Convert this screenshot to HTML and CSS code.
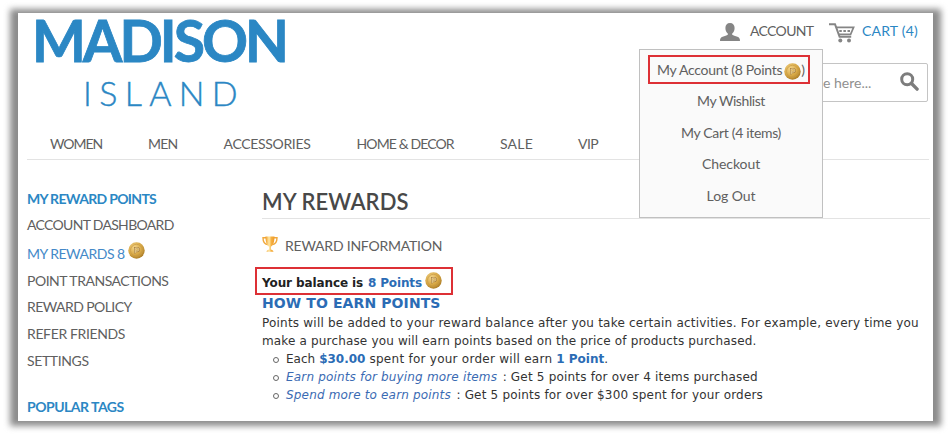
FILE: index.html
```
<!DOCTYPE html>
<html lang="en">
<head>
<meta charset="utf-8">
<title>My Rewards - Madison Island</title>
<link rel="stylesheet" href="styles.css">
</head>
<body>
<svg class="defs" width="0" height="0" aria-hidden="true">
  <defs>
    <radialGradient id="gold" cx="38%" cy="32%" r="75%">
      <stop offset="0" stop-color="#f3d489"/><stop offset=".55" stop-color="#d9aa48"/><stop offset="1" stop-color="#a67722"/>
    </radialGradient>
    <linearGradient id="cup" x1="0" x2="1" y1="0" y2="0">
      <stop offset="0" stop-color="#f09a20"/><stop offset=".4" stop-color="#ffe9a8"/><stop offset=".65" stop-color="#f6b040"/><stop offset="1" stop-color="#ee9a2a"/>
    </linearGradient>
    <symbol id="coin" viewBox="0 0 17 17">
      <circle cx="8.5" cy="8.5" r="8.2" fill="url(#gold)"/>
      <circle cx="8.5" cy="8.3" r="6" fill="none" stroke="#c99b45" stroke-width=".7"/>
      <path d="M7 11.400V5.900h2.200a1.700 1.700 0 0 1 0 3.400H7.200" fill="none" stroke="#a98040" stroke-width="1.900"/>
      <path d="M7.200 11.200V6h2a1.500 1.500 0 0 1 0 3H7.400" fill="none" stroke="#efd596" stroke-width="1"/>
    </symbol>
  </defs>
</svg>
<div class="panel">
  <header class="header">
    <div class="logo">
      <div class="logo-top">MADISON</div>
      <div class="logo-bottom">ISLAND</div>
    </div>
    <div class="tools">
      <div class="links">
        <svg class="user" viewBox="0 0 20 18"><path fill="#858585" d="M10 0c3 0 4.600 2 4.600 5 0 2.400-.9 4.500-2.400 5.500v1.300c1 .9 3.200 1.300 5.200 2 1.800.6 2.600 1.700 2.600 4.200H0c0-2.500.8-3.600 2.600-4.200 2-.7 4.200-1.100 5.200-2v-1.300C6.300 9.500 5.400 7.400 5.400 5c0-3 1.600-5 4.600-5z"/></svg>
        <span class="account">ACCOUNT</span>
        <svg class="cart" viewBox="0 0 26 20"><g fill="none" stroke="#858585" stroke-width="2"><path d="M0 1.200h6l4.600 12.600h11.600"/><path d="M7 4.400h17.600l-3 7H9.500" stroke-width="1.700"/></g><path d="M10.300 8h2.500m1.600 0h2.500m1.600 0h2.500" stroke="#858585" stroke-width="1.800"/><circle cx="11.300" cy="17.600" r="2" fill="#858585"/><circle cx="20" cy="17.600" r="2" fill="#858585"/></svg>
        <span class="cart-label">CART (4)</span>
      </div>
      <div class="search">
        <span class="hint">e here...</span>
        <svg class="lens" viewBox="0 0 19 19"><circle cx="7.200" cy="7.200" r="5.500" fill="none" stroke="#7d7d7d" stroke-width="3"/><path d="M11.300 11.300l5.800 5.800" stroke="#7d7d7d" stroke-width="3.400" stroke-linecap="round"/></svg>
      </div>
    </div>
    <div class="dropdown">
      <div class="item marked"><span class="i1">My Account (8 Points</span><svg class="coin"><use href="#coin"/></svg><span>)</span></div>
      <div class="item i2">My Wishlist</div>
      <div class="item i3">My Cart (4 items)</div>
      <div class="item">Checkout</div>
      <div class="item">Log Out</div>
    </div>
  </header>
  <nav class="nav">
    <span class="n1">WOMEN</span><span class="n2">MEN</span><span class="n3">ACCESSORIES</span><span class="n4">HOME &amp; DECOR</span><span class="n5">SALE</span><span class="n6">VIP</span>
  </nav>
  <div class="columns">
    <aside class="side">
      <h2 class="s0">MY REWARD POINTS</h2>
      <ul>
        <li class="s1">ACCOUNT DASHBOARD</li>
        <li class="current"><span>MY REWARDS 8</span><svg class="coin"><use href="#coin"/></svg></li>
        <li class="s3">POINT TRANSACTIONS</li>
        <li class="s4">REWARD POLICY</li>
        <li class="s5">REFER FRIENDS</li>
        <li class="s6">SETTINGS</li>
      </ul>
      <h2 class="s7">POPULAR TAGS</h2>
    </aside>
    <main class="main">
      <h1>MY REWARDS</h1>
      <div class="info"><svg class="trophy" viewBox="0 0 16 17"><g fill="none" stroke="#f0a83c" stroke-width="1.400"><path d="M4 1.800H1c0 4 1.500 6.300 4.500 6.800M12 1.800h3c0 4-1.500 6.300-4.500 6.800"/></g><path fill="url(#cup)" d="M3.500.6h9c0 5-1 8.900-3.600 10.200v2.800c1 .4 2.300.9 2.600 2.200h-7c.3-1.300 1.600-1.800 2.600-2.200v-2.800C4.500 9.500 3.500 5.600 3.500.6z"/></svg><span>REWARD INFORMATION</span></div>
      <div class="balance"><span class="b1">Your balance is</span><span class="b2">8 Points</span><svg class="coin"><use href="#coin"/></svg></div>
      <h3>HOW TO EARN POINTS</h3>
      <p class="p1">Points will be added to your reward balance after you take certain activities. For example, every time you</p>
      <p class="p2">make a purchase you will earn points based on the price of products purchased.</p>
      <ul class="rules">
        <li><span class="r1">Each</span> <b>$30.00</b> <span class="r2">spent for your order will earn</span> <b>1 Point</b><span>.</span></li>
        <li><em>Earn points for buying more items</em> <span class="sep">:</span> Get 5 points for over 4 items purchased</li>
        <li><em>Spend more to earn points</em> <span class="sep">:</span> Get 5 points for over $300 spent for your orders</li>
      </ul>
    </main>
  </div>
</div>
</body>
</html>
```
FILE: styles.css
```
*, *::before { box-sizing: border-box; }
body { margin: 0; height: 434px; padding: 13px 18px; overflow: hidden; background: #fff; font: 14px/20px Lato, "Open Sans", sans-serif; color: #606060; }
h1, h2, h3, p, ul { margin: 0; padding: 0; }
ul { list-style: none; }
svg { display: block; flex: none; }
.defs { position: absolute; }
.panel { position: relative; width: 915px; height: 408px; white-space: nowrap; }
.panel::before { content: ""; position: absolute; z-index: -2; inset: -4px -8px -5px -8px; background: #8c8c8c; filter: blur(3px); }
.panel::after { content: ""; position: absolute; z-index: -1; inset: 0; background: #fff; }

.header { position: relative; display: flex; justify-content: space-between; height: 117px; padding-left: 18px; }
.logo { color: #2b87c4; }
.logo-top { height: 56px; margin-left: -4px; font-size: 57px; line-height: 55px; font-weight: 700; letter-spacing: -3px; -webkit-text-stroke: .8px #2b87c4; }
.logo-bottom { padding-left: 47px; font-size: 34px; line-height: 48px; font-weight: 300; letter-spacing: 7.3px; -webkit-text-stroke: .4px #2b87c4; }
.tools { width: 290px; padding-right: 5px; }
.links { display: flex; align-items: center; height: 36px; padding-left: 77px; }
.user { width: 20px; height: 18px; margin-top: 2px; }
.account { width: 70px; margin: 0 0 0 10px; letter-spacing: -.65px; }
.cart { width: 26px; height: 20px; margin: 3px 0 0 9px; }
.cart-label { margin-left: 7px; color: #2b87c4; letter-spacing: .2px; }
.search { display: flex; align-items: center; justify-content: space-between; height: 39px; margin-top: 14px; padding: 0 8px 0 179px; border: 1px solid #c4c4c4; border-radius: 2px; color: #909090; }
.lens { width: 19px; height: 19px; margin-top: -2px; }
.dropdown { position: absolute; z-index: 2; left: 621px; top: 36px; width: 184px; height: 169px; padding-top: 5px; border: 1px solid #c0c0c0; background: #fafafa; }
.item { height: 31.5px; line-height: 31.5px; text-align: center; letter-spacing: -.06px; }
.item.marked { display: flex; align-items: center; height: 29px; width: 162px; margin: 0 0 1px 8px; border: 2px solid #dd3035; padding-left: 7px; }
.marked .coin { margin: 3px 0 0 2px; }
.i1 { letter-spacing: -.28px; }
.i2 { letter-spacing: -.42px; }
.i3 { letter-spacing: -.32px; }
.coin { width: 17px; height: 17px; }

.nav { position: relative; height: 30px; margin: 0 4px 0 9px; padding-left: 23px; border-bottom: 1px solid #e3e3e3; display: flex; line-height: 28px; }
.n1 { width: 98px; letter-spacing: -1.05px; }
.n2 { width: 75.500px; letter-spacing: -.8px; }
.n3 { width: 133px; letter-spacing: -.33px; }
.n4 { width: 143.500px; letter-spacing: -.88px; }
.n5 { width: 78px; letter-spacing: .2px; }
.n6 { letter-spacing: -.6px; }

.columns { display: flex; padding: 0 3px 0 9px; }
.side { width: 235px; padding-top: 27px; }
.side h2 { height: 25px; line-height: 24px; font-size: 14px; color: #2b87c4; }
.side li { height: 26.700px; line-height: 26.700px; }
.side .current { display: flex; height: 29px; line-height: 29px; color: #4489c8; letter-spacing: -.5px; }
.current .coin { margin: 3px 0 0 3px; }
.s0 { letter-spacing: -.68px; }
.s1 { letter-spacing: -.68px; }
.s3 { letter-spacing: -.48px; }
.s4 { letter-spacing: -.57px; }
.s5, .s6 { letter-spacing: -.37px; }
.side .s7 { margin-top: 20px; line-height: 26px; letter-spacing: -.5px; }

.main { flex: 1; padding-top: 25px; font: 12px/18px "DejaVu Sans", sans-serif; color: #333; }
h1 { height: 34px; border-bottom: 1px solid #e3e3e3; font: 600 22px/34px Lato, sans-serif; letter-spacing: .1px; color: #484848; }
.info { display: flex; align-items: center; height: 48px; padding-top: 6px; font: 14px/20px Lato, sans-serif; letter-spacing: -.22px; color: #606060; }
.trophy { width: 16px; height: 17px; margin: -4px 7px 0 0; }
.balance { display: flex; align-items: center; width: 198px; height: 28px; margin-left: -7px; padding: 4px 0 0 5px; border: 2px solid #dd3035; font-weight: 700; color: #222; }
.b1 { width: 106px; letter-spacing: -.1px; }
.b2 { color: #2b6cb5; letter-spacing: -.15px; }
.balance .coin { margin: -5px 0 0 3px; }
h3 { height: 19px; font-size: 14px; line-height: 17px; letter-spacing: .1px; color: #2b6cb5; }
.p1 { letter-spacing: .21px; }
.p2 { letter-spacing: .16px; }
.rules li { position: relative; padding-left: 24px; letter-spacing: .19px; }
.rules li::before { content: ""; position: absolute; left: 11px; top: 7px; width: 6px; height: 6px; border: 1px solid #666; border-radius: 50%; }
.rules b { color: #2b6cb5; letter-spacing: 0; }
.rules em { color: #3b6bb3; letter-spacing: .17px; }
.rules .sep { margin-left: 1.500px; }
.r1 { letter-spacing: 0; }
.r2 { letter-spacing: .26px; }
```
